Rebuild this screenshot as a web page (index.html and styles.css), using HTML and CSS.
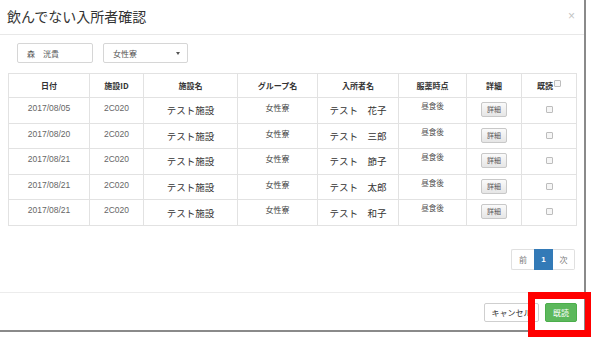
FILE: index.html
```html
<!DOCTYPE html>
<html lang="ja">
<head>
<meta charset="utf-8">
<title>飲んでない入所者確認</title>
<link rel="stylesheet" href="styles.css">
</head>
<body>
<div class="modal">
  <div class="modal-header">
    <h4 class="title">飲んでない入所者確認</h4>
    <span class="close">×</span>
  </div>
  <div class="modal-body">
    <div class="filters">
      <div class="field name">森　洸貴</div>
      <div class="field select"><span>女性寮</span><span class="caret"></span></div>
    </div>
    <table class="grid">
      <colgroup>
        <col class="c1"><col class="c2"><col class="c3"><col class="c4"><col class="c5"><col class="c6"><col class="c7"><col class="c8">
      </colgroup>
      <thead>
        <tr><th>日付</th><th>施設ID</th><th>施設名</th><th>グループ名</th><th>入所者名</th><th>服薬時点</th><th>詳細</th><th>既読<span class="chk head-chk"></span></th></tr>
      </thead>
      <tbody>
        <tr><td class="sm">2017/08/05</td><td class="sm">2C020</td><td class="lg">テスト施設</td><td class="grp">女性寮</td><td class="lg">テスト　花子</td><td class="tp">昼食後</td><td class="act"><span class="mini-btn">詳細</span></td><td class="cb"><span class="chk"></span></td></tr>
        <tr><td class="sm">2017/08/20</td><td class="sm">2C020</td><td class="lg">テスト施設</td><td class="grp">女性寮</td><td class="lg">テスト　三郎</td><td class="tp">昼食後</td><td class="act"><span class="mini-btn">詳細</span></td><td class="cb"><span class="chk"></span></td></tr>
        <tr><td class="sm">2017/08/21</td><td class="sm">2C020</td><td class="lg">テスト施設</td><td class="grp">女性寮</td><td class="lg">テスト　節子</td><td class="tp">昼食後</td><td class="act"><span class="mini-btn">詳細</span></td><td class="cb"><span class="chk"></span></td></tr>
        <tr><td class="sm">2017/08/21</td><td class="sm">2C020</td><td class="lg">テスト施設</td><td class="grp">女性寮</td><td class="lg">テスト　太郎</td><td class="tp">昼食後</td><td class="act"><span class="mini-btn">詳細</span></td><td class="cb"><span class="chk"></span></td></tr>
        <tr><td class="sm">2017/08/21</td><td class="sm">2C020</td><td class="lg">テスト施設</td><td class="grp">女性寮</td><td class="lg">テスト　和子</td><td class="tp">昼食後</td><td class="act"><span class="mini-btn">詳細</span></td><td class="cb"><span class="chk"></span></td></tr>
      </tbody>
    </table>
    <div class="pager-row">
      <ul class="pagination">
        <li class="pg prev">前</li>
        <li class="pg active">1</li>
        <li class="pg next">次</li>
      </ul>
    </div>
  </div>
  <div class="modal-footer">
    <button class="btn btn-default">キャンセル</button>
    <button class="btn btn-success">既読</button>
  </div>
</div>
<div class="highlight"></div>
</body>
</html>
```

FILE: styles.css
```css
html, body {
  margin: 0;
  padding: 0;
  background: #fff;
  overflow: hidden;
}
body {
  width: 591px;
  height: 337px;
  position: relative;
  font-family: "Noto Sans CJK JP", "Liberation Sans", sans-serif;
  color: #333;
}
.modal {
  width: 584px;
  height: 330px;
  background: #fff;
  border-right: 2px solid #8a8a8a;
  border-bottom: 2px solid #8a8a8a;
  display: flex;
  flex-direction: column;
  overflow: hidden;
}
.modal-header {
  flex: 0 0 35px;
  height: 35px;
  box-sizing: border-box;
  border-bottom: 1px solid #e8e8e8;
  display: flex;
  align-items: center;
  justify-content: space-between;
  padding: 0 9px 3px 7px;
}
.title {
  margin: 0;
  font-size: 14px;
  font-weight: normal;
  color: #333;
  line-height: 18px;
}
.close {
  font-family: "Liberation Sans", sans-serif;
  font-size: 12px;
  color: #c4c4c4;
  line-height: 12px;
}
.modal-body {
  padding: 8px 8px 0 8px;
  flex: 1 1 auto;
}
.filters {
  display: flex;
  gap: 10px;
  margin-left: 9px;
  height: 20px;
}
.field {
  box-sizing: border-box;
  height: 20px;
  border: 1px solid #d6d6d6;
  border-radius: 2px;
  font-size: 8px;
  color: #555;
  display: flex;
  align-items: center;
  padding-left: 9px;
}
.name { width: 76px; }
.select {
  width: 85px;
  justify-content: space-between;
  padding-right: 7px;
}
.caret {
  width: 0;
  height: 0;
  border-left: 2px solid transparent;
  border-right: 2px solid transparent;
  border-top: 3px solid #555;
}
.grid {
  margin-top: 10px;
  width: 568px;
  table-layout: fixed;
  border-collapse: collapse;
}
.c1 { width: 81px; }
.c2 { width: 54px; }
.c3 { width: 94px; }
.c4 { width: 80px; }
.c5 { width: 81px; }
.c6 { width: 68px; }
.c7 { width: 55px; }
.c8 { width: 55px; }
.grid th, .grid td {
  border: 1px solid #e2e2e2;
  text-align: center;
  padding: 0;
  font-size: 8px;
  line-height: 11px;
}
.grid th {
  height: 23px;
  font-weight: bold;
  color: #333;
  vertical-align: middle;
}
.grid td {
  height: 25.6px;
  box-sizing: border-box;
  vertical-align: top;
}
.grid td.sm {
  font-family: "Liberation Sans", sans-serif;
  font-size: 8.5px;
  color: #666;
  line-height: 11px;
  padding-top: 5px;
}
.grid td.lg {
  font-size: 9.5px;
  line-height: 13px;
  color: #333;
  vertical-align: middle;
  padding-top: 1px;
}
.grid td.grp {
  color: #444;
  padding-top: 4px;
}
.grid td.tp {
  font-size: 7.5px;
  color: #555;
  padding-top: 2px;
}
.grid td.act {
  padding-top: 4px;
}
.mini-btn {
  display: block;
  margin: 0 auto;
  box-sizing: border-box;
  width: 26px;
  height: 15px;
  line-height: 13px;
  font-size: 7px;
  color: #555;
  border: 1px solid #c8c8c8;
  border-radius: 2px;
  background: linear-gradient(#fafafa, #e6e6e6);
}
.grid td.cb {
  padding-top: 8px;
}
.cb .chk {
  display: block;
  margin: 0 auto;
}
.chk {
  display: inline-block;
  box-sizing: border-box;
  width: 7px;
  height: 7px;
  border: 1px solid #bdbdbd;
  border-radius: 1px;
  background: #f6f6f6;
}
.head-chk {
  vertical-align: 2px;
  margin-left: 1px;
}
.pager-row {
  display: flex;
  justify-content: flex-end;
  margin-top: 23px;
  padding-right: 1px;
}
.pagination {
  list-style: none;
  margin: 0;
  padding: 0;
  display: flex;
}
.pg {
  box-sizing: border-box;
  height: 21px;
  line-height: 19px;
  font-size: 8px;
  color: #777;
  border: 1px solid #e0e0e0;
  text-align: center;
}
.pg.prev { width: 23px; border-radius: 2px 0 0 2px; border-right: none; }
.pg.active {
  width: 19px;
  background: #337ab7;
  border-color: #337ab7;
  color: #fff;
  font-family: "Liberation Sans", sans-serif;
  font-weight: bold;
}
.pg.next { width: 22px; border-radius: 0 2px 2px 0; border-left: none; }
.modal-footer {
  flex: 0 0 38px;
  border-top: 1px solid #ececec;
  height: 38px;
  box-sizing: border-box;
  padding: 10px 7px 0 0;
  display: flex;
  justify-content: flex-end;
  align-items: flex-start;
  gap: 6px;
}
.btn {
  box-sizing: border-box;
  height: 19px;
  border-radius: 2px;
  font-family: "Noto Sans CJK JP", sans-serif;
  font-size: 8px;
  padding: 0;
  margin: 0;
  line-height: 17px;
}
.btn-default {
  width: 55px;
  background: #fff;
  border: 1px solid #cfcfcf;
  color: #333;
}
.btn-success {
  width: 32px;
  background: #5cb85c;
  border: 1px solid #4cae4c;
  color: #fff;
}
.highlight {
  position: absolute;
  left: 528px;
  top: 292px;
  width: 63px;
  height: 45px;
  box-sizing: border-box;
  border: 7px solid #ff0000;
  border-right-width: 6px;
}
```
